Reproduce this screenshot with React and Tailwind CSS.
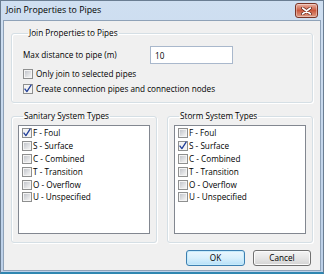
import React from 'react';

const TYPES = ['F - Foul', 'S - Surface', 'C - Combined', 'T - Transition', 'O - Overflow', 'U - Unspecified'];

function CheckBox({ checked }) {
  return (
    <svg width="10" height="10" viewBox="0 0 10 10" className="shrink-0 overflow-visible">
      <defs>
        <linearGradient id="cbInner" x1="0" y1="0" x2="1" y2="1">
          <stop offset="0" stopColor="#c3c6cc" />
          <stop offset="1" stopColor="#f4f4f4" />
        </linearGradient>
      </defs>
      <rect x="0.5" y="0.5" width="9" height="9" fill="#f4f4f4" stroke="#8e8f8f" />
      <rect x="2" y="2" width="6" height="6" fill={checked ? '#f2f2f2' : 'url(#cbInner)'} />
      {checked && (
        <path d="M1.6 4.6 L3.9 7.6 L8.4 0.6" stroke="#23409a" strokeWidth="1.3" fill="none" strokeLinejoin="round" />
      )}
    </svg>
  );
}

function GroupBox({ title, className = '', children }) {
  return (
    <fieldset className={`min-w-0 border border-[#d5dfe5] rounded-[3px] shadow-[inset_1px_1px_0_#fff,1px_1px_0_#fff] ${className}`}>
      <legend className="ml-[5px] px-[1px] leading-[12px]">{title}</legend>
      {children}
    </fieldset>
  );
}

function TypeList({ checkedIndex }) {
  return (
    <div className="mt-[3px] h-[109px] border border-[#828790] bg-white pt-[1px] pl-[3px]">
      {TYPES.map((t, i) => (
        <div key={t} className="h-[12.8px] flex items-center">
          <CheckBox checked={i === checkedIndex} />
          <span className="ml-[1px] leading-[12px]">{t}</span>
        </div>
      ))}
    </div>
  );
}

export default function App() {
  return (
    <div className="w-[324px] h-[274px] flex flex-col bg-gradient-to-b from-[#cfdff1] to-[#bcd0e8] border border-[#6a7d92] border-b-2 border-b-[#2f86b0] font-['Open_Sans',sans-serif] text-[8.2px] text-black">
      {/* Title bar */}
      <div className="h-[19px] flex items-start shrink-0">
        <div className="pl-[5px] pt-[3px] text-[8.8px] leading-[12px]">Join Properties to Pipes</div>
        <div className="ml-auto mt-[2px] mr-[5px] w-[23px] h-[15px] rounded-[3px] border border-[#7a3426] bg-gradient-to-b from-[#e9b2a3] via-[#c9583e] to-[#dd9c86] flex items-center justify-center shadow-[inset_0_0_0_1px_rgba(255,255,255,0.35)]">
          <svg width="11" height="8" viewBox="0 0 11 8">
            <path d="M1.5 1 L9.5 7 M9.5 1 L1.5 7" stroke="#5a1f16" strokeWidth="3" strokeLinecap="round" />
            <path d="M1.5 1 L9.5 7 M9.5 1 L1.5 7" stroke="#ffffff" strokeWidth="1.6" strokeLinecap="round" />
          </svg>
        </div>
      </div>

      {/* Client area */}
      <div className="flex-1 mx-[2px] mb-[1px] bg-[#f0f0f0] border border-[#8fa2b8] pl-[7px] pr-[7px] pt-[6px] flex flex-col">
        <GroupBox title="Join Properties to Pipes" className="pl-[11px] pb-[6px]">
          <div className="mt-[7px] flex items-center">
            <span className="w-[127px] leading-[12px]">Max distance to pipe (m)</span>
            <input
              defaultValue="10"
              className="w-[83px] h-[18px] border border-[#a9b8cc] bg-white px-[4px] text-[8.2px] outline-none"
            />
          </div>
          <div className="mt-[2px] h-[15px] flex items-center">
            <CheckBox checked={false} />
            <span className="ml-[3px] leading-[12px]">Only join to selected pipes</span>
          </div>
          <div className="h-[15px] flex items-center">
            <CheckBox checked={true} />
            <span className="ml-[3px] leading-[12px]">Create connection pipes and connection nodes</span>
          </div>
        </GroupBox>

        <div className="mt-[7px] grid grid-cols-2 gap-[10px]">
          <GroupBox title="Sanitary System Types" className="px-[6px] pb-[8px]">
            <TypeList checkedIndex={0} />
          </GroupBox>
          <GroupBox title="Storm System Types" className="px-[6px] pb-[8px]">
            <TypeList checkedIndex={1} />
          </GroupBox>
        </div>

        <div className="mt-[7px] flex justify-end gap-[8px] pr-[2px]">
          <button className="w-[59px] h-[16px] rounded-[3px] border border-[#3c7fb1] bg-gradient-to-b from-[#eaf6fd] via-[#d9f0fc] to-[#b6e0f8] shadow-[inset_0_0_0_1px_#c6ebfb] leading-none">
            OK
          </button>
          <button className="w-[58px] h-[16px] rounded-[3px] border border-[#707070] bg-gradient-to-b from-[#f4f4f4] via-[#e6e6e6] to-[#d3d3d3] shadow-[inset_0_0_0_1px_#fbfbfb] leading-none">
            Cancel
          </button>
        </div>
      </div>
    </div>
  );
}
